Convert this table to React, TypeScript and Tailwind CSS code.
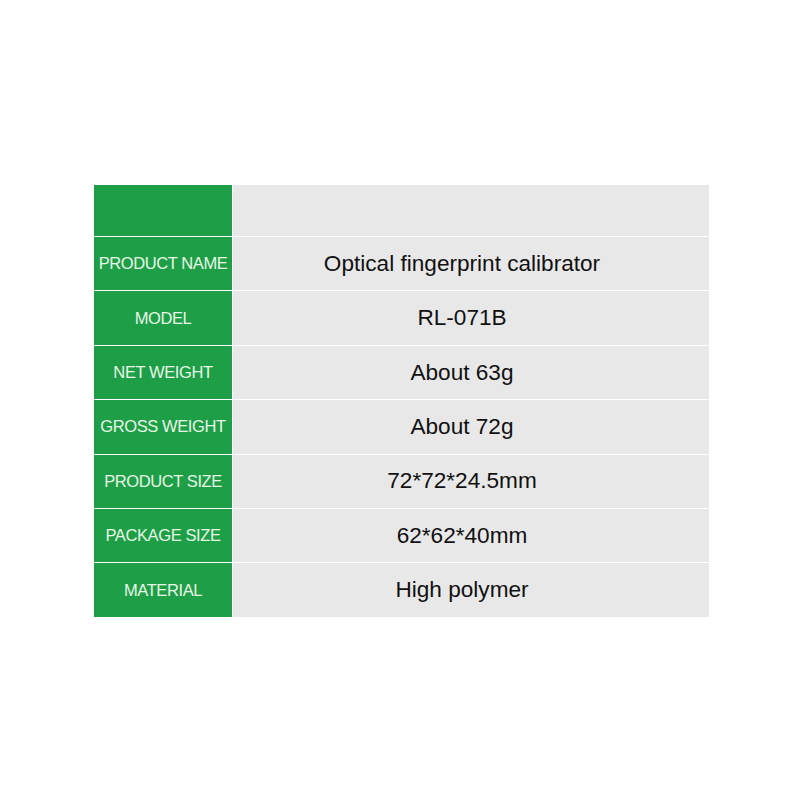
const rows: [string, string][] = [
  ['PRODUCT NAME', 'Optical fingerprint calibrator'],
  ['MODEL', 'RL-071B'],
  ['NET WEIGHT', 'About 63g'],
  ['GROSS WEIGHT', 'About 72g'],
  ['PRODUCT SIZE', '72*72*24.5mm'],
  ['PACKAGE SIZE', '62*62*40mm'],
  ['MATERIAL', 'High polymer'],
];

export default function App() {
  return (
    <div className="w-[803px] h-[803px] bg-white flex flex-col pt-[185px] pl-[94px] font-['Liberation_Sans',Arial,sans-serif]">
      <div className="w-[615px] flex flex-col gap-px">
        {/* header */}
        <div className="flex h-[51px] gap-px">
          <div className="w-[138px] bg-[#1f9e48]" />
          <div className="flex-1 bg-[#e8e8e8]" />
        </div>
        {rows.map(([label, value]) => (
          <div key={label} className="flex h-[53.4px] gap-px">
            <div className="w-[138px] bg-[#1f9e48] flex items-center justify-center text-[16.5px] tracking-[-0.4px] text-[#e6f7e6] whitespace-nowrap">
              {label}
            </div>
            <div className="flex-1 bg-[#e8e8e8] flex items-center justify-center pr-[18px] text-[22.6px] text-[#111]">
              {value}
            </div>
          </div>
        ))}
      </div>
    </div>
  );
}
